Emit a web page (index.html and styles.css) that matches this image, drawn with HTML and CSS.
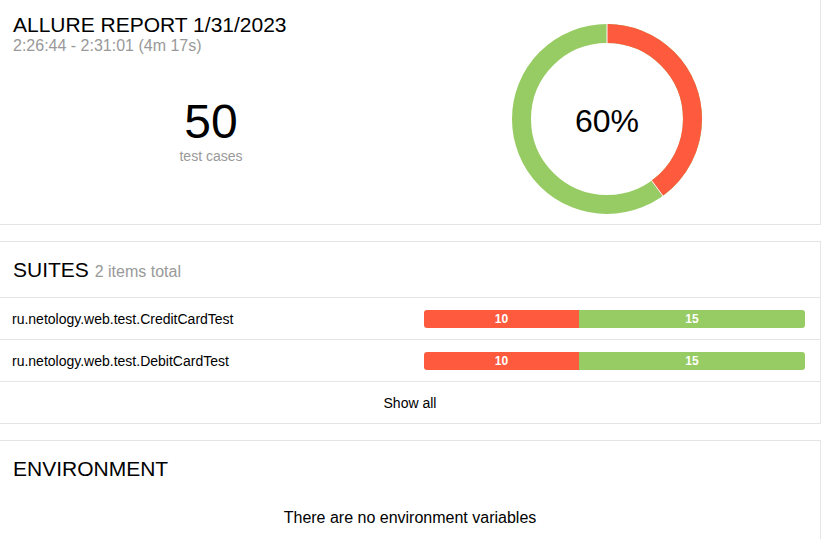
FILE: index.html
```html
<!DOCTYPE html>
<html lang="en">
<head>
<meta charset="utf-8">
<title>Allure Report</title>
<link rel="stylesheet" href="styles.css">
</head>
<body>
<section class="widget summary">
  <div class="summary__col">
    <h2 class="widget__title">ALLURE REPORT 1/31/2023</h2>
    <div class="summary__subtitle">2:26:44 - 2:31:01 (4m 17s)</div>
    <div class="summary__count">50</div>
    <div class="summary__label">test cases</div>
  </div>
  <div class="summary__col summary__chart">
    <svg class="donut" width="190" height="190" viewBox="0 0 190 190">
      <circle cx="95" cy="95" r="85.5" fill="none" stroke="#97cc64" stroke-width="19"></circle>
      <circle cx="95" cy="95" r="85.5" fill="none" stroke="#fd5a3e" stroke-width="19" stroke-dasharray="214.88 400" transform="rotate(-90 95 95)"></circle>
      <line x1="95" y1="0" x2="95" y2="19.5" stroke="#fff" stroke-width="1"></line>
      <line x1="139.4" y1="156.2" x2="151.1" y2="172.2" stroke="#fff" stroke-width="1"></line>
      <text x="95" y="108" text-anchor="middle" class="donut__text">60%</text>
    </svg>
  </div>
</section>

<section class="widget">
  <div class="widget__header">
    <h2 class="widget__title">SUITES <span class="widget__subtitle">2 items total</span></h2>
  </div>
  <div class="table__row">
    <div class="table__name">ru.netology.web.test.CreditCardTest</div>
    <div class="bar">
      <div class="bar__seg bar__seg_failed" style="width:40.7%">10</div>
      <div class="bar__seg bar__seg_passed">15</div>
    </div>
  </div>
  <div class="table__row">
    <div class="table__name">ru.netology.web.test.DebitCardTest</div>
    <div class="bar">
      <div class="bar__seg bar__seg_failed" style="width:40.7%">10</div>
      <div class="bar__seg bar__seg_passed">15</div>
    </div>
  </div>
  <div class="widget__footer">Show all</div>
</section>

<section class="widget">
  <div class="widget__header widget__header_plain">
    <h2 class="widget__title">ENVIRONMENT</h2>
  </div>
  <div class="widget__empty">There are no environment variables</div>
</section>
</body>
</html>
```

FILE: styles.css
```css
html, body {
  margin: 0;
  padding: 0;
  background: #fff;
}

body {
  font-family: "Liberation Sans", Arial, sans-serif;
  font-size: 14px;
  color: #000;
  width: 822px;
}

.widget {
  width: 820px;
  background: #fff;
  border: 1px solid #e5e5e5;
  border-left: 0;
  margin-bottom: 16px;
}

.widget__title {
  margin: 0;
  font-size: 21px;
  line-height: 24px;
  height: 24px;
  font-weight: normal;
  color: #000;
}

.widget__subtitle {
  font-size: 16px;
  line-height: 1;
  color: #999;
}

/* Summary */
.summary {
  border-top: 0;
  display: flex;
  padding: 0 15px 0 13px;
  box-sizing: border-box;
  width: 821px;
}

.summary__col {
  flex: 1;
  padding-top: 13px;
}

.summary__subtitle {
  font-size: 16px;
  line-height: 18px;
  color: #999;
}

.summary__count {
  margin-top: 43px;
  font-size: 48px;
  line-height: 48px;
  text-align: center;
}

.summary__label {
  margin-top: 2px;
  font-size: 14px;
  line-height: 16px;
  color: #999;
  text-align: center;
}

.summary__chart {
  display: flex;
  justify-content: center;
  padding-top: 24px;
  padding-bottom: 10px;
}

.donut {
  display: block;
}

.donut__text {
  font-family: "Liberation Sans", Arial, sans-serif;
  font-size: 32px;
  fill: #000;
}

/* Header */
.widget__header {
  padding: 16px 13px 15px;
  border-bottom: 1px solid #e5e5e5;
}

.widget__header_plain {
  border-bottom: 0;
}

/* Table rows */
.table__row {
  display: grid;
  grid-template-columns: 1fr 381px;
  align-items: center;
  height: 41px;
  padding: 0 15px 0 12px;
  border-bottom: 1px solid #e5e5e5;
  line-height: 16px;
}

.bar {
  display: flex;
  height: 18px;
  border-radius: 3px;
  overflow: hidden;
}

.bar__seg {
  color: #fff;
  font-size: 12px;
  font-weight: bold;
  line-height: 18px;
  text-align: center;
}

.bar__seg_failed {
  background: #fd5a3e;
}

.bar__seg_passed {
  background: #97cc64;
  flex: 1;
}

.widget__footer {
  height: 41px;
  display: flex;
  align-items: center;
  justify-content: center;
  line-height: 16px;
}

.widget__empty {
  padding: 13px 13px 16px;
  font-size: 16px;
  line-height: 18px;
  text-align: center;
}
```
